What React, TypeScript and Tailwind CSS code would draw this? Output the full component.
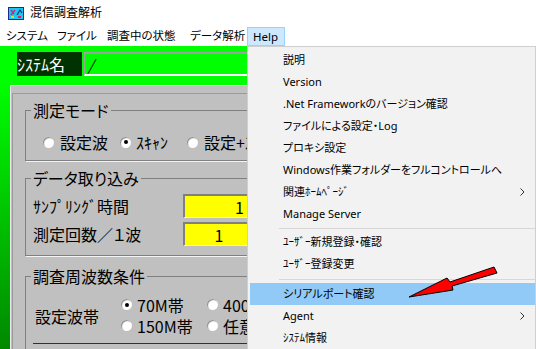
import React from "react";

const JP = "font-['Noto_Sans','Noto_Sans_CJK_JP',sans-serif] [font-feature-settings:'palt']";
const OLD = "font-['Noto_Sans_CJK_JP',sans-serif]";

// アプリのアイコン
function AppIcon() {
  return (
    <svg width="16" height="13" viewBox="0 0 16 13">
      <rect x="0.5" y="0.5" width="15" height="12" fill="#19c8f0" stroke="#1b2a8c" />
      <path d="M3 3l3 4M7 3l-4 5" stroke="#e0206a" strokeWidth="1.4" />
      <path d="M9 8l3-5l2 3" stroke="#1b2a8c" strokeWidth="1.2" fill="none" />
      <rect x="3" y="9" width="3" height="2" fill="#f0d020" />
      <rect x="10" y="9" width="3" height="2" fill="#e02060" />
    </svg>
  );
}

function Radio({ checked }: { checked?: boolean }) {
  return (
    <span className="flex h-[11px] w-[11px] shrink-0 items-center justify-center rounded-full bg-white shadow-[inset_1px_1px_1px_#8a8a8a]">
      {checked && <span className="h-[4px] w-[4px] rounded-full bg-black" />}
    </span>
  );
}

type Item = { label: string; sub?: boolean; active?: boolean } | "sep";

const HELP_ITEMS: Item[] = [
  { label: "説明" },
  { label: "Version" },
  { label: ".Net Frameworkのバージョン確認" },
  { label: "ファイルによる設定・Log" },
  { label: "プロキシ設定" },
  { label: "Windows作業フォルダーをフルコントロールへ" },
  { label: "関連ﾎｰﾑﾍﾟｰｼﾞ", sub: true },
  { label: "Manage Server" },
  "sep",
  { label: "ﾕｰｻﾞｰ新規登録・確認" },
  { label: "ﾕｰｻﾞｰ登録変更" },
  "sep",
  { label: "シリアルポート確認", active: true },
  { label: "Agent", sub: true },
  { label: "ｼｽﾃﾑ情報" },
];

export default function App() {
  return (
    <div className={`relative h-[349px] w-[536px] overflow-hidden bg-white text-black ${JP}`}>
      {/* タイトルバー */}
      <div className="flex h-[26px] items-center gap-[6px] pl-[8px] text-[12px]">
        <AppIcon />
        <span>混信調査解析</span>
      </div>

      {/* メニューバー */}
      <div className="flex h-[20px] whitespace-nowrap text-[11.5px]">
        <span className="flex w-[51px] items-center pl-[6px]">システム</span>
        <span className="flex w-[50px] items-center pl-[6px]">ファイル</span>
        <span className="flex w-[83px] items-center pl-[6px]">調査中の状態</span>
        <span className="flex w-[63px] items-center pl-[6px]">データ解析</span>
        <span className="mt-[1px] flex h-[19px] w-[38px] items-center border border-[#99d1ff] bg-[#cce8ff] pl-[5px]">Help</span>
      </div>

      {/* フォーム本体 */}
      <div className={`h-[303px] w-[247px] overflow-hidden bg-[linear-gradient(to_bottom,#00ff00_12%,#008800_100%)] ${OLD}`}>
        <div className="flex h-[39px] pl-[17px] pt-[6px]">
          <div className="flex h-[24px] w-[65px] items-center bg-[#003300] text-[16px] leading-none text-white">ｼｽﾃﾑ名</div>
          <div className="ml-[2px] flex h-[24px] flex-1 items-center border-l border-t-2 border-b-2 border-l-[#a0a0a0] border-t-[#a0a0a0] border-b-white pl-[3px] text-[15px] italic leading-none">
            /
          </div>
        </div>

        <div className="ml-[10px] h-full border-l border-t border-[#e8e8e8] bg-[#c0c0c0] pl-[1px] pt-[7px]">
          <div className="h-full border-l border-t border-[#9a9a9a] pl-[12px] pt-[6px] text-[16px]">
            {/* 測定モード */}
            <fieldset className="w-[260px] border border-[#808080] pb-[8px] shadow-[1px_1px_0_#f4f4f4]">
              <legend className="ml-[5px] h-[20px] px-[2px] leading-[20px]">測定モード</legend>
              <div className="box-content flex h-[20px] items-center whitespace-nowrap pl-[17px] pt-[12px]">
                <span className="flex w-[77px] items-center gap-[6px]"><Radio />設定波</span>
                <span className="flex w-[67px] items-center gap-[5px]"><Radio checked />ｽｷｬﾝ</span>
                <span className="flex items-center gap-[6px]"><Radio />設定+ｽｷｬﾝ</span>
              </div>
            </fieldset>

            {/* データ取り込み */}
            <fieldset className="mt-[7px] w-[260px] border border-[#808080] pb-[9px] shadow-[1px_1px_0_#f4f4f4]">
              <legend className="ml-[5px] h-[20px] px-[2px] leading-[20px]">データ取り込み</legend>
              <div className="mt-[6px] flex h-[24px] items-center pl-[7px]">
                <span className="w-[150px]">ｻﾝﾌﾟﾘﾝｸﾞ時間</span>
                <span className="flex h-[24px] w-[70px] items-center justify-end border-l-2 border-t-2 border-b border-[#808080] border-b-white bg-[#ffff00] pr-[9px]">1</span>
              </div>
              <div className="mt-[4px] flex h-[24px] items-center pl-[7px]">
                <span className="w-[150px]">測定回数／１波</span>
                <span className="flex h-[24px] w-[70px] items-center justify-center border-l-2 border-t-2 border-b border-[#808080] border-b-white bg-[#ffff00]">1</span>
              </div>
            </fieldset>

            {/* 調査周波数条件 */}
            <fieldset className="mt-[10px] h-[120px] w-[260px] border border-[#808080]">
              <legend className="ml-[5px] h-[20px] px-[2px] leading-[20px]">調査周波数条件</legend>
              <div className="mt-[8px] flex whitespace-nowrap">
                <span className="flex h-[44px] w-[95px] items-center pl-[9px]">設定波帯</span>
                <div className="grid grid-cols-[86px_60px] grid-rows-[21px_21px] items-center">
                  <span className="flex items-center gap-[5px]"><Radio checked />70M帯</span>
                  <span className="flex items-center gap-[5px]"><Radio />400M帯</span>
                  <span className="flex items-center gap-[5px]"><Radio />150M帯</span>
                  <span className="flex items-center gap-[5px]"><Radio />任意</span>
                </div>
              </div>
              <div className="ml-[7px] mt-[5px] h-[1px] bg-[#303030]" />
            </fieldset>
          </div>
        </div>
      </div>

      {/* Help ドロップダウン */}
      <div className="absolute left-[247px] top-[46px] h-[310px] w-[289px] border border-[#cfcfcf] bg-[#f2f2f2] pl-[2px] pt-[2px] text-[11px]">
        {HELP_ITEMS.map((it, i) =>
          it === "sep" ? (
            <div key={i} className={`flex items-center pl-[29px] ${i === 8 ? "h-[6px]" : "h-[8px]"}`}>
              <div className="h-[1px] w-full bg-[#d7d7d7]" />
            </div>
          ) : (
            <div
              key={i}
              className={`flex h-[22px] items-center pl-[33px] pr-[10px] ${it.active ? "bg-[#91c9f7]" : ""}`}
            >
              <span className="flex-1 whitespace-nowrap">{it.label}</span>
              {it.sub && (
                <svg width="5" height="8" viewBox="0 0 5 8">
                  <path d="M0.5 0.5l3.5 3.5l-3.5 3.5" stroke="#333" fill="none" />
                </svg>
              )}
            </div>
          )
        )}
      </div>

      {/* 赤い矢印 */}
      <svg className="absolute left-[400px] top-[260px]" width="100" height="45" viewBox="0 0 100 45">
        <polygon points="9,37 47,18 50,22 94,7 97,13 52,26 53,30" fill="#ff0000" stroke="#000" strokeWidth="1" strokeLinejoin="round" />
      </svg>
    </div>
  );
}
